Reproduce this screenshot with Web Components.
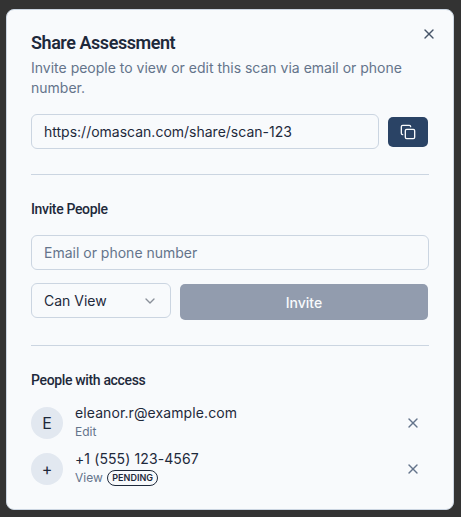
<!DOCTYPE html>
<html lang="en">
<head>
<meta charset="utf-8">
<title>Share Assessment</title>
<style>
  html, body { margin: 0; height: 100%; background: #333333; }
  body { font-family: Inter, "Liberation Sans", sans-serif; color: #1e293b; overflow: hidden; }
</style>
</head>
<body>
<share-dialog>
  <span slot="title">Share Assessment</span>
  <span slot="description">Invite people to view or edit this scan via email or phone number.</span>

  <div slot="link" class="row">
    <text-field>https://omascan.com/share/scan-123</text-field>
    <icon-button></icon-button>
  </div>

  <section-label slot="invite-label">Invite People</section-label>
  <text-field slot="invite-email" placeholder>Email or phone number</text-field>
  <role-select slot="invite-role">Can View</role-select>
  <invite-button slot="invite-submit">Invite</invite-button>

  <section-label slot="people-label">People with access</section-label>
  <access-row slot="people" initial="E" name="eleanor.r@example.com" role="Edit"></access-row>
  <access-row slot="people" initial="+" name="+1 (555) 123-4567" role="View" pending></access-row>
</share-dialog>

<script>
const CLOSE_ICON = (size, color) => `
  <svg width="${size}" height="${size}" viewBox="0 0 24 24" fill="none" stroke="${color}" stroke-width="2" stroke-linecap="round" stroke-linejoin="round">
    <path d="M18 6 6 18"/><path d="m6 6 12 12"/>
  </svg>`;

class ShareDialog extends HTMLElement {
  constructor() {
    super();
    this.attachShadow({ mode: "open" });
    this.shadowRoot.innerHTML = `
      <style>
        :host { display: block; box-sizing: border-box; width: 448px; height: 501px; margin: 9px 0 0 6px;
                position: relative; background: #f8fafc; border: 1px solid #cbd5e1; border-radius: 8px;
                padding: 24px; }
        h2 { margin: 0; font-family: Roboto, sans-serif; font-size: 18px; line-height: 18px; font-weight: 600; letter-spacing: -0.45px; color: #1e293b; }
        p { margin: 6px 0 0; font-size: 14px; line-height: 20px; color: #64748b; }
        .link { margin-top: 16px; }
        ::slotted(.row) { display: flex; align-items: center; gap: 9px; }
        .rule { height: 1px; background: #cbd5e1; margin: 25px 0 0; }
        .label { margin-top: 24px; }
        .email { margin-top: 16px; }
        .controls { display: flex; gap: 8px; margin-top: 13px; align-items: flex-start; }
        .people { display: flex; flex-direction: column; gap: 6px; margin-top: 13px; }
        .close { position: absolute; top: 16px; right: 16px; width: 16px; height: 16px; line-height: 0; }
      </style>
      <h2><slot name="title"></slot></h2>
      <p><slot name="description"></slot></p>
      <div class="link"><slot name="link"></slot></div>
      <div class="rule"></div>
      <div class="label"><slot name="invite-label"></slot></div>
      <div class="email"><slot name="invite-email"></slot></div>
      <div class="controls"><slot name="invite-role"></slot><slot name="invite-submit"></slot></div>
      <div class="rule"></div>
      <div class="label"><slot name="people-label"></slot></div>
      <div class="people"><slot name="people"></slot></div>
      <div class="close">${CLOSE_ICON(16, "#475569")}</div>
    `;
  }
}

class TextField extends HTMLElement {
  constructor() {
    super();
    this.attachShadow({ mode: "open" });
    this.shadowRoot.innerHTML = `
      <style>
        :host { display: block; flex: 1; box-sizing: border-box; height: 35px; padding: 0 12px;
                border: 1px solid #cbd5e1; border-radius: 6px; background: #f8fafc;
                font-size: 14px; line-height: 33px; color: #1e293b; white-space: nowrap; overflow: hidden; }
        :host([placeholder]) { color: #64748b; }
      </style>
      <slot></slot>
    `;
  }
}

class IconButton extends HTMLElement {
  constructor() {
    super();
    this.attachShadow({ mode: "open" });
    this.shadowRoot.innerHTML = `
      <style>
        :host { display: flex; flex: none; align-items: center; justify-content: center; box-sizing: border-box;
                width: 40px; height: 30px; margin: 1px 1px 0 0; background: #2a4365; border-radius: 5px; }
        svg { display: block; }
      </style>
      <svg width="16" height="16" viewBox="0 0 24 24" fill="none" stroke="#f8fafc" stroke-width="2" stroke-linecap="round" stroke-linejoin="round">
        <rect x="8" y="8" width="14" height="14" rx="2" ry="2"/>
        <path d="M4 16c-1.1 0-2-.9-2-2V4c0-1.1.9-2 2-2h10c1.1 0 2 .9 2 2"/>
      </svg>
    `;
  }
}

class SectionLabel extends HTMLElement {
  constructor() {
    super();
    this.attachShadow({ mode: "open" });
    this.shadowRoot.innerHTML = `
      <style>
        :host { display: block; font-family: Roboto, sans-serif; font-size: 14px; line-height: 20px; font-weight: 500; letter-spacing: -0.35px; color: #1e293b; }
      </style>
      <slot></slot>
    `;
  }
}

class RoleSelect extends HTMLElement {
  constructor() {
    super();
    this.attachShadow({ mode: "open" });
    this.shadowRoot.innerHTML = `
      <style>
        :host { display: flex; align-items: center; justify-content: space-between; box-sizing: border-box;
                width: 140px; height: 35px; padding: 0 12px; border: 1px solid #cbd5e1; border-radius: 6px;
                background: #f8fafc; font-size: 14px; color: #1e293b; }
        svg { display: block; opacity: 0.5; }
      </style>
      <slot></slot>
      <svg width="16" height="16" viewBox="0 0 24 24" fill="none" stroke="#1e293b" stroke-width="2" stroke-linecap="round" stroke-linejoin="round"><path d="m6 9 6 6 6-6"/></svg>
    `;
  }
}

class InviteButton extends HTMLElement {
  constructor() {
    super();
    this.attachShadow({ mode: "open" });
    this.shadowRoot.innerHTML = `
      <style>
        :host { display: flex; flex: 1; align-items: center; justify-content: center; box-sizing: border-box;
                height: 36px; margin: 1px 1px 0 1px; background: #929cae; border-radius: 5px;
                font-size: 14px; font-weight: 500; color: #f8fafc; }
      </style>
      <slot></slot>
    `;
  }
}

class AccessRow extends HTMLElement {
  constructor() {
    super();
    this.attachShadow({ mode: "open" });
    const pending = this.hasAttribute("pending") ? `<span class="badge">PENDING</span>` : "";
    this.shadowRoot.innerHTML = `
      <style>
        :host { display: flex; align-items: center; gap: 12px; height: 40px; }
        .avatar { flex: none; width: 32px; height: 32px; border-radius: 50%; background: #e2e8f0;
                  display: flex; align-items: center; justify-content: center; font-size: 16px; color: #1e293b; }
        .info { flex: 1; min-width: 0; height: 40px; }
        .name { font-size: 14px; line-height: 20px; letter-spacing: 0.1px; color: #1e293b; }
        .role { display: flex; align-items: center; gap: 4.5px; margin-top: 1px; font-size: 12px; line-height: 16px; color: #64748b; }
        .badge { box-sizing: border-box; height: 16px; padding: 0 4px; border: 1px solid #1e293b; border-radius: 8px;
                 font-size: 9px; line-height: 14px; font-weight: 600; color: #1e293b; }
        .remove { flex: none; line-height: 0; margin-right: 8px; }
      </style>
      <div class="avatar">${this.getAttribute("initial")}</div>
      <div class="info">
        <div class="name">${this.getAttribute("name")}</div>
        <div class="role">${this.getAttribute("role")}${pending}</div>
      </div>
      <div class="remove">${CLOSE_ICON(16, "#64748b")}</div>
    `;
  }
}

customElements.define("share-dialog", ShareDialog);
customElements.define("text-field", TextField);
customElements.define("icon-button", IconButton);
customElements.define("section-label", SectionLabel);
customElements.define("role-select", RoleSelect);
customElements.define("invite-button", InviteButton);
customElements.define("access-row", AccessRow);
</script>
</body>
</html>
